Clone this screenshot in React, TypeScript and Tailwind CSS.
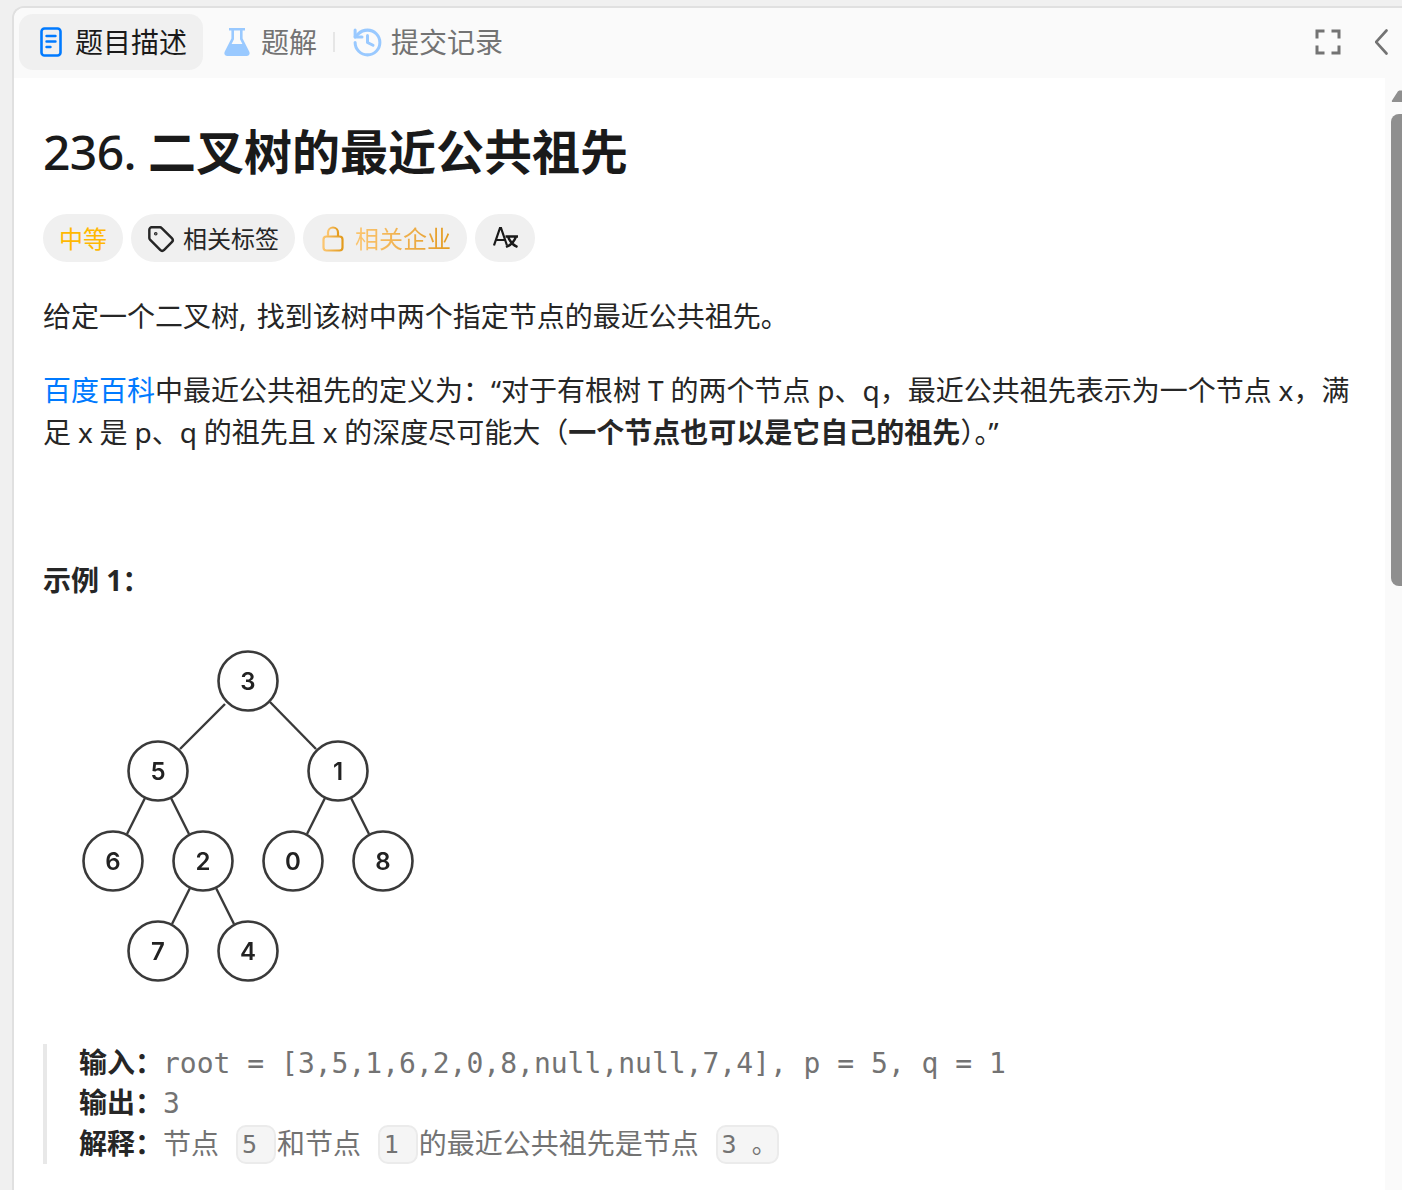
import { History, Tag } from 'lucide-react';

const FONT = 'font-["Noto_Sans","Noto_Sans_CJK_SC",sans-serif]';
const MONO = 'font-["DejaVu_Sans_Mono","Noto_Sans_CJK_SC",monospace]';

const nodes = [
  { label: '3', x: 178, y: 41 },
  { label: '5', x: 88, y: 131 },
  { label: '1', x: 268, y: 131 },
  { label: '6', x: 43, y: 221 },
  { label: '2', x: 133, y: 221 },
  { label: '0', x: 223, y: 221 },
  { label: '8', x: 313, y: 221 },
  { label: '7', x: 88, y: 311 },
  { label: '4', x: 178, y: 311 },
];

const edges = [
  [155, 64, 110, 109],
  [200, 62, 246, 109],
  [75, 158, 57, 194],
  [101, 158, 119, 194],
  [255, 158, 237, 194],
  [281, 158, 299, 194],
  [120, 248, 102, 284],
  [146, 248, 164, 284],
];

const DocIcon = () => (
  <svg width="22" height="30" viewBox="0 0 22 30" fill="none" className="text-[#007aff]">
    <rect x="1.5" y="1.5" width="19" height="27" rx="3" stroke="currentColor" strokeWidth="2.6" />
    <path d="M6.500 9h9M6.500 14.500h9M6.500 20h4" stroke="currentColor" strokeWidth="2.4" strokeLinecap="round" />
  </svg>
);

const FlaskIcon = () => (
  <svg width="26" height="30" viewBox="0 0 26 30" className="text-[#99c9ff]">
    <path
      fill="currentColor"
      fillRule="evenodd"
      d="M5 1h16v2.400h-2.400v8.200l6.600 13c1.200 2.400-.1 4.400-2.600 4.400H3.400C.9 29-.4 27 .8 24.600l6.600-13V3.400H5V1zm5 2.400v8.800L7.600 17h10.800L16 12.200V3.400h-6z"
    />
  </svg>
);

const FullscreenIcon = () => (
  <svg width="26" height="26" viewBox="0 0 26 26" fill="none" stroke="#737373" strokeWidth="3">
    <path d="M2 9.500V2h7.500M16.500 2H24v7.500M24 16.500V24h-7.500M9.500 24H2v-7.500" />
  </svg>
);

const BackIcon = () => (
  <svg width="14" height="26" viewBox="0 0 14 26" fill="none" stroke="#737373" strokeWidth="2.600" strokeLinecap="round">
    <path d="M11.500 1.500 1 13l10.500 11.500" />
  </svg>
);

const LockIcon = () => (
  <svg width="22" height="26" viewBox="0 0 22 26" fill="none" stroke="url(#lockGrad)" strokeWidth="2.2">
    <defs>
      <linearGradient id="lockGrad" x1="0" y1="0" x2="1" y2="0">
        <stop offset="0" stopColor="#fbc56f" />
        <stop offset="1" stopColor="#e39b1d" />
      </linearGradient>
    </defs>
    <rect x="1.5" y="10.500" width="19" height="14" rx="3" />
    <path d="M6 10V6.500a5 5 0 0 1 10 0V10" />
  </svg>
);

const TranslateIcon = () => (
  <svg width="26" height="22" viewBox="0 0 26 22" fill="none" stroke="#1a1a1a" strokeWidth="2.2">
    <path d="M1 18.500 7 1h1l6 17.500M3 13h9" />
    <path d="M12.500 9.500H25M15 9.500c1.500 4.500 5 8.500 9.500 10.500M23 9.500c-1.500 4.500-5 8.500-10 10.500" strokeWidth="2.4" />
  </svg>
);

const ScrollArrow = () => (
  <svg width="11" height="12" viewBox="0 0 11 12" fill="#8f8f8f" className="ml-auto block">
    <path d="M1 10.500 6.500 2c.5-1 1.500-1.500 2.500-1.500h2V12H2c-1.200 0-1.500-.7-1-1.500z" />
  </svg>
);

const Tree = () => (
  <svg width="345" height="345" viewBox="0 0 345 345" className="blur-[0.5px]">
    {edges.map(([x1, y1, x2, y2], i) => (
      <line key={i} x1={x1} y1={y1} x2={x2} y2={y2} stroke="#3a3a3a" strokeWidth="2.4" />
    ))}
    {nodes.map(n => (
      <g key={n.label}>
        <circle cx={n.x} cy={n.y} r="29.500" fill="#fff" stroke="#3a3a3a" strokeWidth="2.6" />
        <text
          x={n.x}
          y={n.y + 9}
          textAnchor="middle"
          fontSize="24"
          fontWeight="600"
          fill="#222"
          fontFamily="Inter, sans-serif"
        >
          {n.label}
        </text>
      </g>
    ))}
  </svg>
);

const Code = ({ width, children }: { width: string; children: React.ReactNode }) => (
  <code
    className={`${width} ${MONO} mt-[1px] inline-block h-[39px] rounded-[10px] border-2 border-[#ebebeb] bg-[#f5f5f5] pl-[4px] align-top text-[25px] leading-[35px]`}
  >
    {children}
  </code>
);

export default function App() {
  return (
    <div className={`h-[1190px] w-[1402px] overflow-hidden bg-[#f0f0f0] pl-3 pt-[6px] text-[#262626] ${FONT}`}>
      <div className="flex h-[1300px] flex-col overflow-hidden rounded-tl-xl border-l-2 border-t-2 border-[#e0e0e0] bg-white">
        <div className="flex h-[70px] shrink-0 items-center bg-[#fafafa] pb-[2px] pl-[5px]">
          <div className="flex h-[56px] w-[184px] items-center gap-[13px] rounded-[14px] bg-[#f0f0f0] pl-[21px] text-[28px] text-[#1a1a1a]">
            <DocIcon />
            <span>题目描述</span>
          </div>
          <div className="ml-[21px] flex items-center gap-[11px] text-[28px] text-[#737373]">
            <FlaskIcon />
            <span>题解</span>
          </div>
          <div className="mx-[16px] h-[20px] w-[2px] bg-[#e6e6e6]" />
          <div className="flex items-center gap-[7px] text-[28px] text-[#737373]">
            <History size={33} strokeWidth={2.2} className="text-[#99c9ff]" />
            <span>提交记录</span>
          </div>
          <div className="ml-auto flex items-center gap-[34px] pr-[13px]">
            <FullscreenIcon />
            <BackIcon />
          </div>
        </div>

        <div className="flex flex-1">
          <div className="w-[1345px] pl-[29px]">
            <h1 className="mt-[38px] text-[48px] font-bold leading-[72px] text-[#1a1a1a]">
              <span className="font-medium tracking-[-0.6px]">236. </span>二叉树的最近公共祖先
            </h1>

            <div className="mt-[26px] flex items-center gap-2 text-[24px]">
              <div className="flex h-[48px] w-[80px] items-center justify-center rounded-full bg-[#f0f0f0] pt-[1px] text-[#ffb800]">
                中等
              </div>
              <div className="flex h-[48px] w-[164px] items-center justify-center gap-[8px] rounded-full bg-[#f0f0f0] pt-[1px] text-[#262626]">
                <Tag size={28} strokeWidth={2.1} />
                <span>相关标签</span>
              </div>
              <div className="flex h-[48px] w-[164px] items-center justify-center gap-[11px] rounded-full bg-[#f0f0f0] pl-[3px] pt-[1px]">
                <LockIcon />
                <span className="bg-gradient-to-r from-[#fbc56f] to-[#e39b1d] bg-clip-text text-transparent">相关企业</span>
              </div>
              <div className="flex h-[48px] w-[60px] items-center justify-center rounded-full bg-[#f0f0f0] pl-[2px]">
                <TranslateIcon />
              </div>
            </div>

            <p className="mt-[33px] text-[28px] leading-[42px]">
              给定一个二叉树,<span className="ml-[3px]"> 找到该树中两个指定节点的最近公共祖先。</span>
            </p>

            <p className="mt-[32px] text-[28px] leading-[42px] [word-spacing:-0.4px]">
              <span className="text-[#007aff]">百度百科</span>
              中最近公共祖先的定义为：“对于有根树 T 的两个节点 p、q，最近公共祖先表示为一个节点 x，满足 x 是 p、q 的祖先且 x 的深度尽可能大（
              <b>一个节点也可以是它自己的祖先</b>）。”
            </p>

            <p className="mt-[106px] text-[28px] font-bold leading-[42px]">示例 1：</p>

            <div className="mt-[39px] pl-[27px]">
              <Tree />
            </div>

            <div className="mt-[59px] border-l-4 border-[#e8e8e8] pl-[32px] text-[28px] text-[#737373]">
              <div className={`h-[40px] whitespace-pre leading-[36px] ${MONO}`}>
                <b className={`text-[#262626] ${FONT}`}>输入：</b>root = [3,5,1,6,2,0,8,null,null,7,4], p = 5, q = 1
              </div>
              <div className={`h-[40px] whitespace-pre leading-[36px] ${MONO}`}>
                <b className={`text-[#262626] ${FONT}`}>输出：</b>3
              </div>
              <div className={`h-[40px] whitespace-pre leading-[38px] ${MONO}`}>
                <b className={`text-[#262626] ${FONT}`}>解释：</b>节点 <Code width="w-[40px] mr-[1px]">5</Code>和节点 <Code width="w-[40px] mr-[1px]">1</Code>的最近公共祖先是节点 <Code width="w-[63px]">3 。</Code>
              </div>
            </div>
          </div>

          <div className="ml-auto w-[17px] shrink-0 bg-[#fafafa]">
            <div className="mt-[12px]">
              <ScrollArrow />
            </div>
            <div className="ml-[6px] mt-[12px] h-[472px] rounded-l-[8px] bg-[#8f8f8f]" />
          </div>
        </div>
      </div>
    </div>
  );
}
